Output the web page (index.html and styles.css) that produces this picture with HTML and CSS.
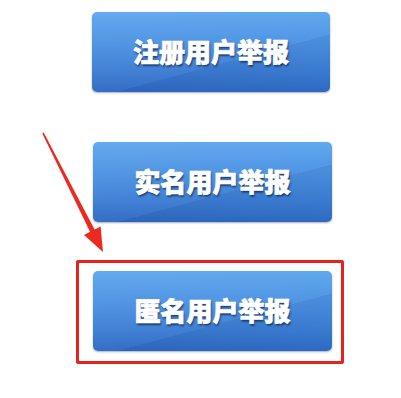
FILE: index.html
```html
<!DOCTYPE html>
<html lang="zh-CN">
<head>
  <meta charset="UTF-8">
  <meta name="viewport" content="width=device-width, initial-scale=1.0">
  <title>举报</title>
  <link rel="stylesheet" href="styles.css">
</head>
<body>
  <div class="page">
    <div class="list">
      <a class="btn btn-first" href="#">注册用户举报</a>
      <a class="btn btn-second" href="#">实名用户举报</a>
      <div class="mark">
        <a class="btn" href="#">匿名用户举报</a>
      </div>
    </div>

    <!-- 红色箭头 -->
    <svg class="arrow" width="401" height="398" viewBox="0 0 401 398">
      <polygon fill="#ec2a22" points="42.3,133.4 43.7,132.6 94.6,229.4 100.6,226.4 103,252 84,235 90,231.8"/>
    </svg>
  </div>
</body>
</html>
```

FILE: styles.css
```css
*{
  margin: 0;
  padding: 0;
  box-sizing: border-box;
}
html,body{
  width: 100%;
  height: 100%;
  background: #fff;
  font-family: "Noto Sans CJK SC", "Liberation Sans", sans-serif;
}
.page{
  position: relative;
  width: 401px;
  height: 398px;
  overflow: hidden;
}
.list{
  display: flex;
  flex-direction: column;
  align-items: flex-start;
  padding: 12px 0 0 76px;
}
.btn{
  display: flex;
  align-items: center;
  justify-content: center;
  width: 239px;
  height: 80px;
  padding-bottom: 4px;
  border-radius: 5px;
  background:
    linear-gradient(165deg, rgba(255,255,255,0.06) 0, rgba(255,255,255,0.03) 60%, rgba(0,0,0,0.04) 60%, rgba(0,0,0,0) 100%),
    linear-gradient(to bottom, #5aa5ee 0, #4a90e2 40%, #3a7bd2 75%, #2e69c2 100%);
  box-shadow: 0 1px 2px rgba(0,20,60,0.35);
  color: #fff;
  font-size: 26px;
  font-weight: 900;
  text-decoration: none;
  -webkit-text-stroke: 0.7px #fff;
  text-shadow: 1px 2px 2px rgba(10,25,60,0.7);
}
.btn-first{
  margin-left: 16px;
  width: 238px;
}
.btn-second{
  margin: 50px 0 0 17px;
}
.mark{
  margin-top: 38px;
  width: 268px;
  height: 104px;
  padding: 8px 0 0 14px;
  border: 3px solid #e5231d;
  border-radius: 2px;
}
.arrow{
  position: absolute;
  left: 0;
  top: 0;
}
```
